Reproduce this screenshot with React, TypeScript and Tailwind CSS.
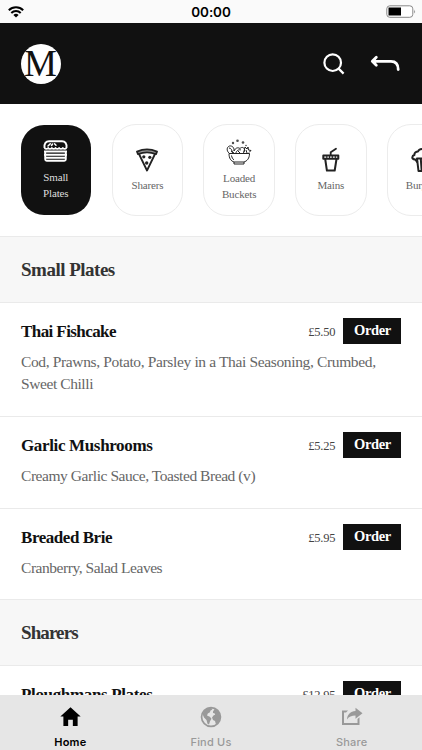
import { IoMdHome } from "react-icons/io";
import type { ReactNode } from "react";

interface Category {
  label: string[];
  icon: ReactNode;
  active?: boolean;
}

interface MenuItemProps {
  name: string;
  nameClass: string;
  price: string;
  lines: { text: string; className: string }[];
  className: string;
}

const BurgerIcon = () => (
  <svg width="25" height="22" viewBox="0 0 25 22" fill="none" stroke="currentColor" strokeWidth="1.900" strokeLinejoin="round">
    <path d="M1.500 8C1 3.500 3 1.200 6 1.200h13c3 0 5 2.300 4.500 6.800" />
    <path d="M1.500 8c1 1.200 2.700 1.200 3.700 0 1 1.200 2.600 1.200 3.600 0 1 1.200 2.700 1.200 3.700 0 1 1.200 2.600 1.200 3.600 0 1 1.200 2.700 1.200 3.700 0 1 1.200 2.700 1.200 3.700 0" />
    <path d="M2.200 10.500v8.800q0 1.500 1.500 1.500h17.600q1.500 0 1.500-1.500v-8.800M1 11.500h23M1 14.800h23M2.500 17.800h20" />
    <path d="M5 6l2.300-2.300M8.500 5.500l1-1.500M11.500 3.800l1.500 1.500" strokeWidth="1.500" strokeLinecap="round" />
  </svg>
);

const PizzaIcon = () => (
  <svg width="22" height="24" viewBox="0 0 22 24" fill="none" stroke="currentColor" strokeWidth="1.800" strokeLinejoin="round">
    <path d="M1 3.600Q11-.8 21 3.600l-1 2.500Q11 2.600 2 6.100z" fill="#999" />
    <path d="M3 6l8 16.500L19 6" />
    <g fill="currentColor" stroke="none">
      <circle cx="7.800" cy="8.800" r="1.600" />
      <circle cx="13.800" cy="9.300" r="1.600" />
      <circle cx="10.700" cy="15" r="1.700" />
    </g>
  </svg>
);

const BowlIcon = () => (
  <svg width="26" height="26" viewBox="0 0 26 26" fill="none" stroke="currentColor" strokeWidth="1">
    <path d="M3 14.500h20.500c0 5-2.500 7.500-5.500 8.500v2H8v-2c-3-1-5-3.500-5-8.500zM8 23h10M5.500 16.500c.3 2 1.300 3.500 2.500 4.500" />
    <path d="M3 14C.5 12 .5 8 3.500 7c3-.5 5 2 4.500 5 1.500-3 3.500-4 6-2.500 2-2 4.500-1 4.500 1.500l-1 3M3 9c2 0 3 2 3.500 5M10 14c0-2 3-4 5-3" />
    <path d="M18 13l1-5 2 2 1-2 .5 3 2.500.5-2 2M5 12l3 2M12 12l2 2M20 11l1 3" />
    <g fill="currentColor" stroke="none" opacity=".8">
      <circle cx="7" cy="4" r="1.200" />
      <circle cx="11.500" cy="1.800" r="1.300" />
      <circle cx="17" cy="3.500" r="1.300" />
      <circle cx="20" cy="6.500" r=".8" />
    </g>
  </svg>
);

const CupIcon = () => (
  <svg width="18" height="25" viewBox="0 0 18 25" fill="none" stroke="currentColor" strokeWidth="2" strokeLinejoin="round" strokeLinecap="round">
    <path d="M8.700 8V5.200l5.300-3.500" strokeWidth="1.800" />
    <path d="M1.300 8.500h15v3.200h-15zM3.200 12l1.700 11.500h7.800L14.500 12" />
    <path d="M4.800 8.500v3M7.500 8.500v3M10.300 8.500v3M13.300 8.500v3" strokeWidth="1.100" />
  </svg>
);

const CupcakeIcon = () => (
  <svg width="24" height="24" viewBox="0 0 24 24" fill="none" stroke="currentColor" strokeWidth="2" strokeLinejoin="round">
    <path d="M6.500 14.500C5.500 12.500 5 12 4 11.500 0 11 1 7.500 3.500 7 3 5 5 3.500 7 3.500c1-3.300 9-3.300 10 0 2 0 4 1.500 3.500 3.500 2.500.5 3.500 4-.5 4.500-1 .5-1.500 1-2.500 3" />
    <path d="M6 10.500h12l-1.500 12.500h-9zM9.800 11l.8 11M14.200 11l-.8 11" />
  </svg>
);

const GlobeIcon = () => (
  <svg width="22" height="22" viewBox="0 0 22 22" fill="currentColor">
    <path fillRule="evenodd" d="M11 .7a10.300 10.300 0 1 0 0 20.600A10.300 10.300 0 0 0 11 .7zm0 1.700a8.600 8.600 0 1 1 0 17.200A8.600 8.600 0 0 1 11 2.400z" />
    <path d="M2.500 8l2-4 4-2.200 3 .2.800 1.500-2 1.200-.3 1.600-2.200 1.200L7 9.500l2.800 1.300 1.700 2-1.500 2.400-1 3.300-1.500-.8-1-3.700-2.500-2.500z" />
    <path d="M13 5.500l1.800-2.700 3.500 2L20 9l.3 3.500-2 4-2.300 2-1-3.500-2-1-1-2.500 1.700-2.300 1.500-.4-.7-1.600-1.500-.2z" />
  </svg>
);

const ShareIcon = () => (
  <svg width="22" height="19" viewBox="0 0 22 19" fill="currentColor">
    <path d="M1 3.500h6L5 5.500H3v10.500h13.500v-4l2-1.700V18H1z" />
    <path d="M14.500.8l7 5.500-7 5.500V8.500C10.500 8.500 8 9.500 6 12.500c.3-5 3.500-8.200 8.500-8.500z" />
  </svg>
);

const categories: Category[] = [
  { label: ["Small", "Plates"], icon: <BurgerIcon />, active: true },
  { label: ["Sharers"], icon: <PizzaIcon /> },
  { label: ["Loaded", "Buckets"], icon: <BowlIcon /> },
  { label: ["Mains"], icon: <CupIcon /> },
  { label: ["Burgers"], icon: <CupcakeIcon /> },
];

function StatusBar() {
  return (
    <div className="flex h-[23px] shrink-0 items-center justify-between bg-[#fafafa] pr-[6px] pl-2">
      <svg width="28" height="12" viewBox="0 0 28 12" fill="none" stroke="#000" strokeWidth="2">
        <path d="M.8 4.300a10.200 10.200 0 0 1 14.400 0M3.300 7a6.700 6.700 0 0 1 9.400 0" />
        <path d="M8 11.500L5.400 9a3.700 3.700 0 0 1 5.200 0z" fill="#000" stroke="none" />
      </svg>
      <span className="pt-px font-[Inter,sans-serif] text-[13.5px] font-semibold tracking-[-0.1px] text-black">00:00</span>
      <svg width="30" height="13" viewBox="0 0 30 13">
        <rect x=".8" y=".8" width="26" height="11.500" rx="3" fill="#fff" stroke="#888" />
        <rect x="2.500" y="2.500" width="12.500" height="8" fill="#000" />
        <path d="M28.200 4.500q1.600 2 0 4z" fill="#888" />
      </svg>
    </div>
  );
}

function Header() {
  return (
    <header className="flex h-[81px] shrink-0 items-center justify-between bg-[#111] pr-[22px] pl-[20.5px]">
      <div className="flex size-10 items-center justify-center overflow-hidden rounded-full bg-white">
        <span className="text-[37px] leading-10 text-[#111]">M</span>
      </div>
      <div className="flex items-center gap-[25px] text-white">
        <svg width="22" height="22" viewBox="0 0 22 22" fill="none" stroke="currentColor" strokeWidth="2.200">
          <circle cx="9.700" cy="9.700" r="8.300" />
          <path d="M15.600 15.600l5 5" />
        </svg>
        <svg width="30" height="18" viewBox="0 0 30 18" fill="none" stroke="currentColor" strokeWidth="2.800" strokeLinecap="round" strokeLinejoin="round">
          <path d="M6.300 2.300L2.300 6.300l4 4M3 6.300H21c5 0 7.200 3 7.200 8.200" />
          <path d="M6 3.500L3.500 6.300 6 9z" fill="currentColor" stroke="none" />
        </svg>
      </div>
    </header>
  );
}

function CategoryCard({ label, icon, active }: Category) {
  return (
    <div
      className={`flex h-[92px] w-[71.5px] shrink-0 flex-col items-center justify-center rounded-[24px] border bg-clip-padding ${
        active ? "border-transparent bg-[#111] text-white" : "border-[#ececec] bg-white text-[#222]"
      }`}
    >
      {icon}
      <div
        className={`mt-[5px] text-center text-[11px] leading-4 tracking-[-0.15px] ${active ? "pt-0.5 text-[#ddd]" : "text-[#666]"}`}
      >
        {label.map((line) => (
          <div key={line}>{line}</div>
        ))}
      </div>
    </div>
  );
}

function SectionTitle({ title, className }: { title: string; className: string }) {
  return (
    <h2 className="flex h-[66px] shrink-0 items-center border-t border-[#eaeaea] bg-[#f7f7f7] px-[21px] pt-0.5 text-[19px] font-bold text-[#333]">
      <span className={className}>{title}</span>
    </h2>
  );
}

function MenuItem({ name, nameClass, price, lines, className }: MenuItemProps) {
  return (
    <div className={`shrink-0 border-t border-[#eaeaea] bg-white pt-[15px] pr-[20.6px] pl-[21px] ${className}`}>
      <div className="flex h-[26px] items-center">
        <h3 className={`grow pt-0.5 text-[17px] font-bold text-[#111] ${nameClass}`}>{name}</h3>
        <span className="mr-2 pt-0.5 text-[12.5px] tracking-[-0.2px] text-[#444]">{price}</span>
        <button type="button" className="h-[26px] w-[58px] bg-[#111] text-[14.5px] font-bold tracking-[-0.4px] text-white">
          Order
        </button>
      </div>
      <div className="mt-[7px] text-[15.5px] leading-[22px] whitespace-nowrap text-[#666]">
        {lines.map((line) => (
          <p key={line.text} className={line.className}>
            {line.text}
          </p>
        ))}
      </div>
    </div>
  );
}

function TabBar() {
  return (
    <nav className="grid h-[55px] shrink-0 grid-cols-3 bg-[#e6e6e6] font-[Inter,sans-serif] text-[11px] font-medium tracking-[0.2px] text-[#999]">
      <div className="flex flex-col items-center text-black">
        <div className="flex h-[39px] items-center pt-1">
          <IoMdHome size={25} />
        </div>
        <span className="font-semibold">Home</span>
      </div>
      <div className="flex flex-col items-center">
        <div className="flex h-[39px] items-center pt-1">
          <GlobeIcon />
        </div>
        <span>Find Us</span>
      </div>
      <div className="flex flex-col items-center">
        <div className="flex h-[39px] items-center pt-1">
          <ShareIcon />
        </div>
        <span>Share</span>
      </div>
    </nav>
  );
}

export default function App() {
  return (
    <div className="flex h-[750px] w-[422px] flex-col overflow-hidden bg-white font-['Liberation_Serif',serif]">
      <StatusBar />
      <Header />
      <div className="flex h-[132px] shrink-0 items-center gap-[20.2px] overflow-hidden pl-[20px]">
        {categories.map((category) => (
          <CategoryCard key={category.label[0]} {...category} />
        ))}
      </div>
      <main className="flex min-h-0 grow flex-col overflow-hidden">
        <SectionTitle title="Small Plates" className="tracking-[-0.5px]" />
        <MenuItem
          name="Thai Fishcake"
          nameClass="tracking-[-0.58px]"
          price="£5.50"
          className="h-[114px]"
          lines={[
            { text: "Cod, Prawns, Potato, Parsley in a Thai Seasoning, Crumbed,", className: "tracking-[-0.36px]" },
            { text: "Sweet Chilli", className: "tracking-[-0.42px]" },
          ]}
        />
        <MenuItem
          name="Garlic Mushrooms"
          nameClass="tracking-[-0.35px]"
          price="£5.25"
          className="h-[92px]"
          lines={[{ text: "Creamy Garlic Sauce, Toasted Bread (v)", className: "tracking-[-0.44px]" }]}
        />
        <MenuItem
          name="Breaded Brie"
          nameClass="tracking-[-0.45px]"
          price="£5.95"
          className="h-[91px]"
          lines={[{ text: "Cranberry, Salad Leaves", className: "tracking-[-0.46px]" }]}
        />
        <SectionTitle title="Sharers" className="tracking-[-0.9px]" />
        <MenuItem
          name="Ploughmans Plates"
          nameClass="tracking-[-0.35px]"
          price="£12.95"
          className="h-[92px]"
          lines={[]}
        />
      </main>
      <TabBar />
    </div>
  );
}
